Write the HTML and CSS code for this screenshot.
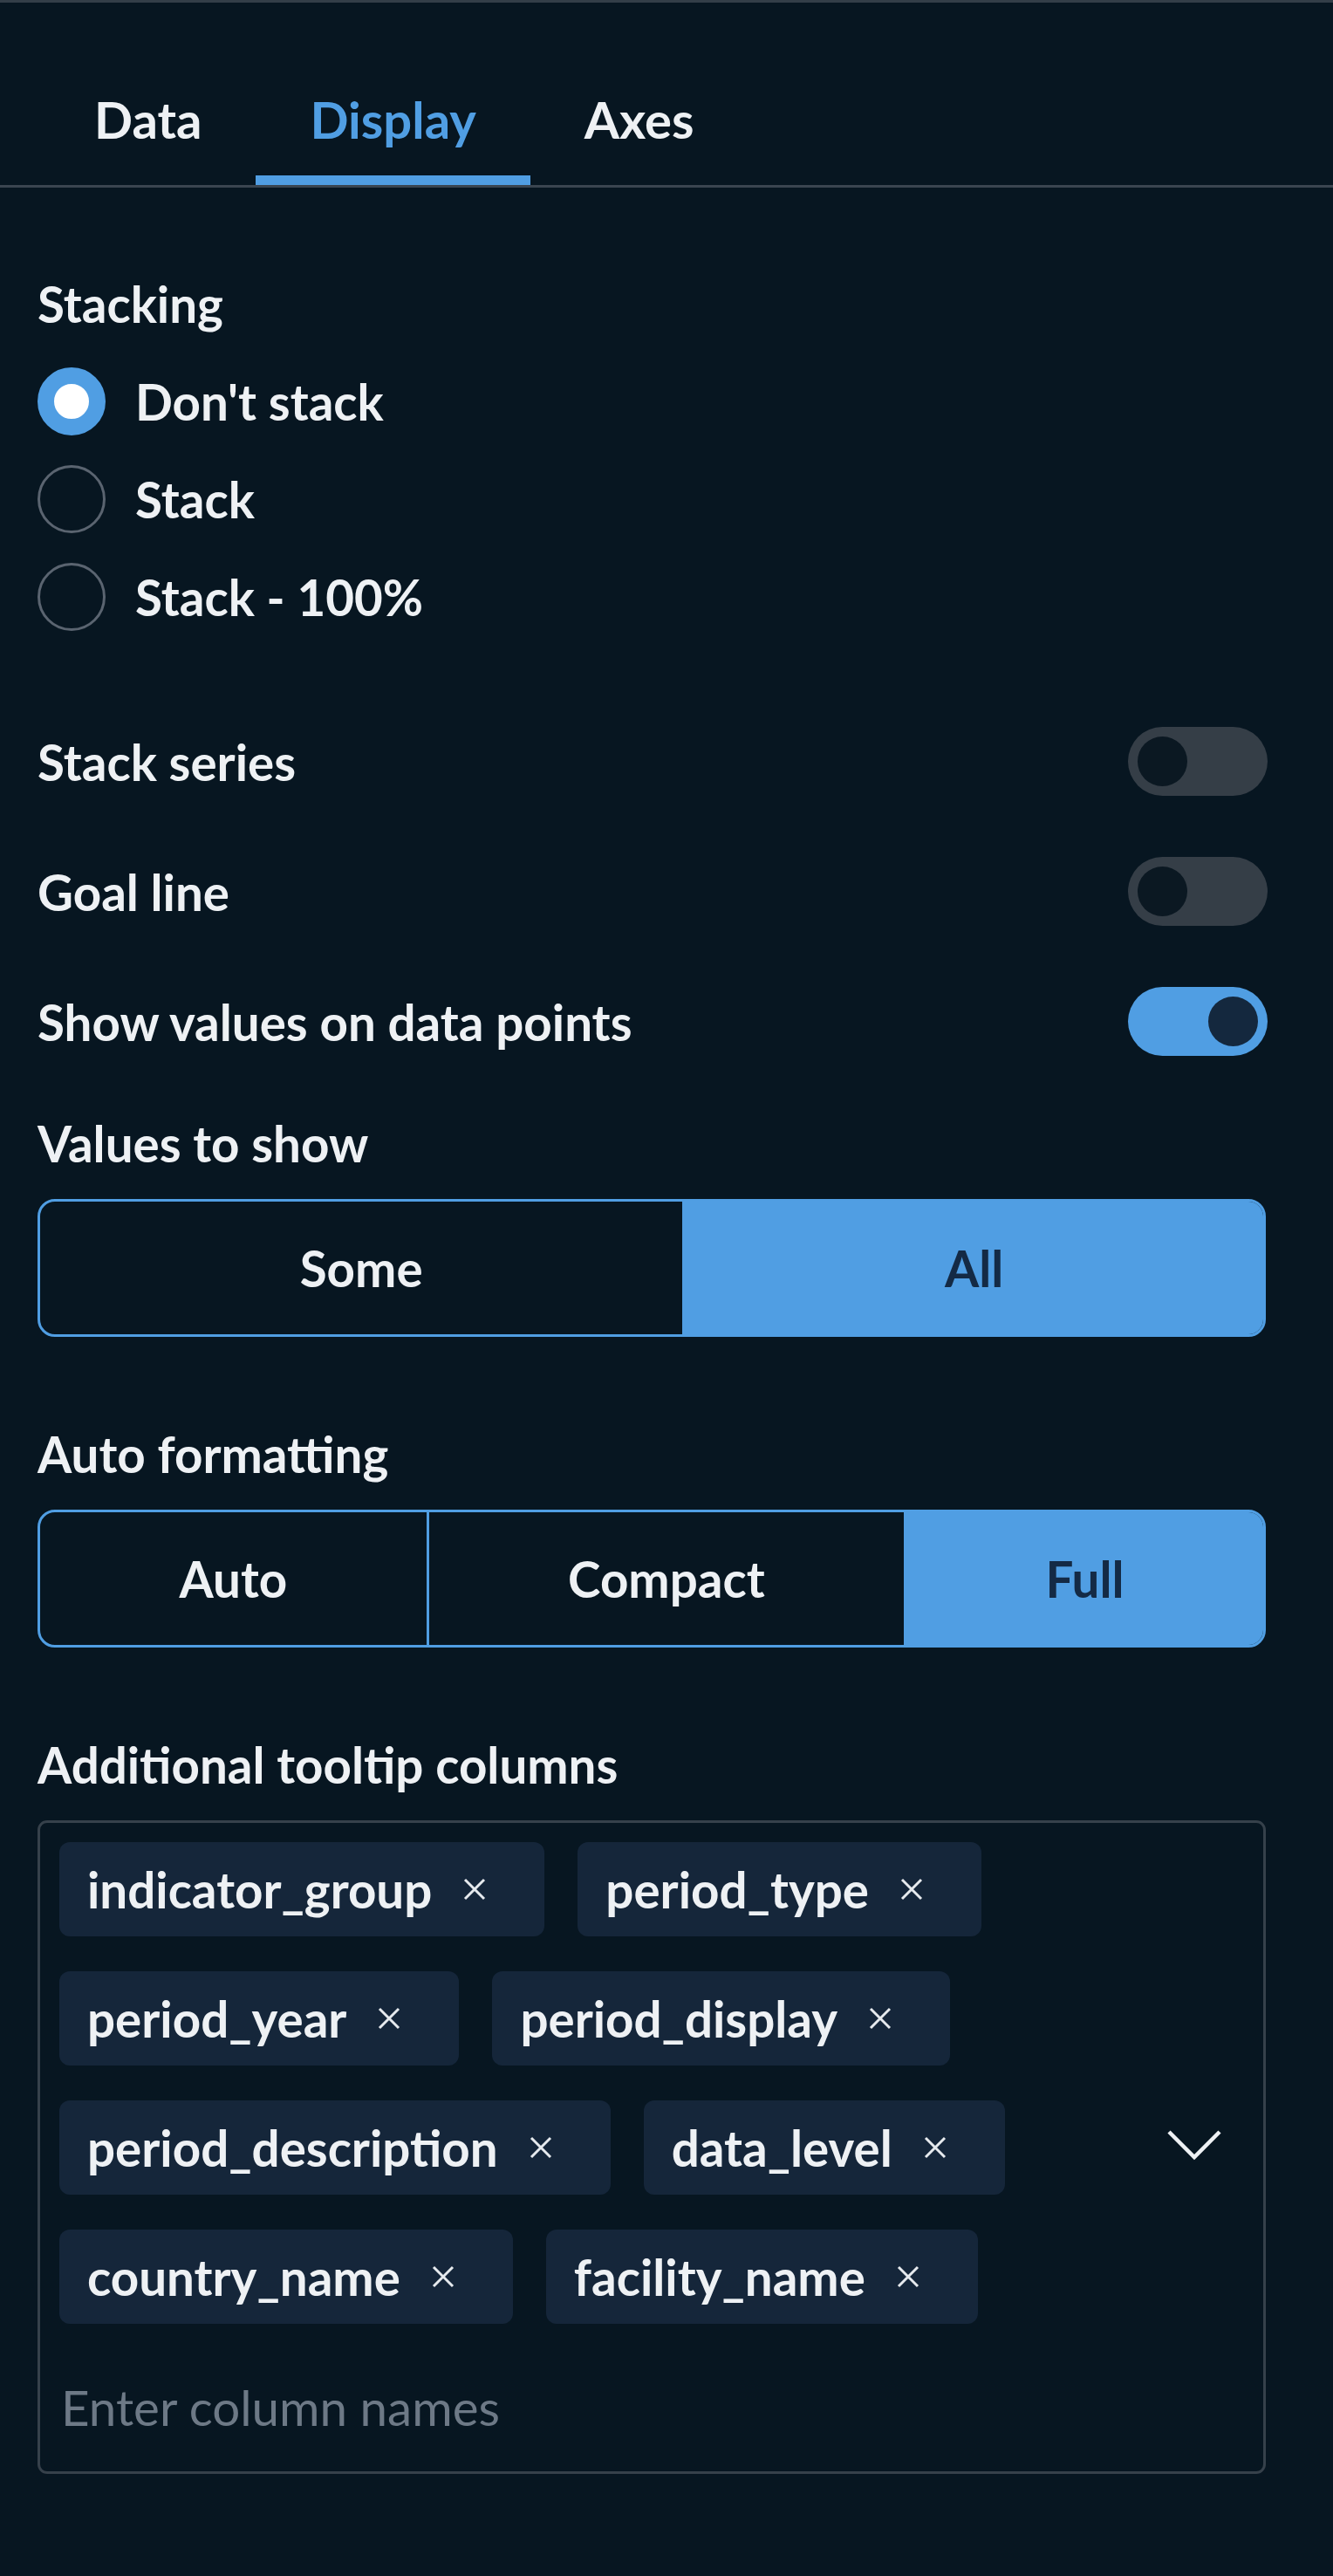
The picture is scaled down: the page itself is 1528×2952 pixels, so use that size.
FILE: index.html
```html
<!DOCTYPE html>
<html lang="en">
<head>
<meta charset="utf-8">
<title>Display settings</title>
<link rel="stylesheet" href="styles.css">
</head>
<body>
<div class="panel">
  <nav class="tabs">
    <div class="tab">Data</div>
    <div class="tab active">Display</div>
    <div class="tab">Axes</div>
  </nav>

  <div class="content">
    <div class="label stacking-label">Stacking</div>
    <div class="radios">
      <div class="radio-row"><span class="radio checked"></span><span class="radio-text">Don't stack</span></div>
      <div class="radio-row"><span class="radio"></span><span class="radio-text">Stack</span></div>
      <div class="radio-row"><span class="radio"></span><span class="radio-text">Stack - 100%</span></div>
    </div>

    <div class="toggles">
      <div class="toggle-row"><span class="label">Stack series</span><span class="toggle"></span></div>
      <div class="toggle-row"><span class="label">Goal line</span><span class="toggle"></span></div>
      <div class="toggle-row"><span class="label">Show values on data points</span><span class="toggle on"></span></div>
    </div>

    <div class="label field-label values-label">Values to show</div>
    <div class="segmented">
      <div class="seg">Some</div>
      <div class="seg selected">All</div>
    </div>

    <div class="label field-label format-label">Auto formatting</div>
    <div class="segmented">
      <div class="seg">Auto</div>
      <div class="seg">Compact</div>
      <div class="seg selected">Full</div>
    </div>

    <div class="label field-label tooltip-label">Additional tooltip columns</div>
    <div class="multiselect">
      <div class="ms-main">
        <div class="chips">
          <span class="chip">indicator_group<svg class="x" viewBox="0 0 30 30"><path d="M4 4 L26 26 M26 4 L4 26"/></svg></span>
          <span class="chip">period_type<svg class="x" viewBox="0 0 30 30"><path d="M4 4 L26 26 M26 4 L4 26"/></svg></span>
          <span class="chip">period_year<svg class="x" viewBox="0 0 30 30"><path d="M4 4 L26 26 M26 4 L4 26"/></svg></span>
          <span class="chip">period_display<svg class="x" viewBox="0 0 30 30"><path d="M4 4 L26 26 M26 4 L4 26"/></svg></span>
          <span class="chip">period_description<svg class="x" viewBox="0 0 30 30"><path d="M4 4 L26 26 M26 4 L4 26"/></svg></span>
          <span class="chip">data_level<svg class="x" viewBox="0 0 30 30"><path d="M4 4 L26 26 M26 4 L4 26"/></svg></span>
          <span class="chip">country_name<svg class="x" viewBox="0 0 30 30"><path d="M4 4 L26 26 M26 4 L4 26"/></svg></span>
          <span class="chip">facility_name<svg class="x" viewBox="0 0 30 30"><path d="M4 4 L26 26 M26 4 L4 26"/></svg></span>
        </div>
        <div class="placeholder">Enter column names</div>
      </div>
      <svg class="chevron" viewBox="0 0 64 36"><path d="M3 3 L32 32 L61 3"/></svg>
    </div>
  </div>
</div>
</body>
</html>
```
FILE: styles.css
```css
html, body {
  margin: 0;
  padding: 0;
  background: #071621;
}
body {
  font-family: Lato, "Noto Sans", sans-serif;
  font-weight: 700;
  font-size: 56.5px;
  line-height: 68px;
  color: #eef1f4;
  min-height: 2952px;
}
.panel {
  width: 1528px;
}
.tabs {
  display: flex;
  border-top: 3px solid #333e48;
  border-bottom: 3px solid #3a4550;
  padding-left: 46px;
  font-size: 58px;
}
.tab {
  padding: 100px 62px 30px;
  border-bottom: 11px solid transparent;
}
.tab.active {
  color: #509ee3;
  border-bottom-color: #509ee3;
}
.content {
  padding: 0 77px 0 43px;
}
.stacking-label {
  margin-top: 99px;
}
.radios {
  display: flex;
  flex-direction: column;
  gap: 34px;
  margin-top: 39px;
}
.radio-row {
  display: flex;
  align-items: center;
  height: 78px;
}
.radio {
  box-sizing: border-box;
  width: 78px;
  height: 78px;
  border-radius: 50%;
  border: 3px solid #5a6470;
  flex: none;
}
.radio.checked {
  border: 19px solid #509ee3;
  background: #ffffff;
}
.radio-text {
  margin-left: 34px;
}
.toggles {
  display: flex;
  flex-direction: column;
  gap: 70px;
  margin-top: 110px;
}
.toggle-row {
  display: flex;
  align-items: center;
  justify-content: space-between;
  height: 79px;
}
.toggle {
  box-sizing: border-box;
  width: 160px;
  height: 79px;
  border-radius: 40px;
  background: #353e47;
  padding: 11px;
  display: flex;
  justify-content: flex-start;
  margin-right: -2px;
}
.toggle::after {
  content: "";
  width: 57px;
  height: 57px;
  border-radius: 50%;
  background: #0b1822;
}
.toggle.on {
  background: #509ee3;
  justify-content: flex-end;
}
.toggle.on::after {
  background: #14283e;
}
.values-label {
  margin-top: 66px;
}
.format-label,
.tooltip-label {
  margin-top: 100px;
}
.segmented {
  display: flex;
  margin-top: 30px;
  height: 158px;
  box-sizing: border-box;
  border: 3px solid #509ee3;
  border-radius: 20px;
  overflow: hidden;
}
.seg {
  flex: 1 1 auto;
  display: flex;
  align-items: center;
  justify-content: center;
  border-left: 3px solid #509ee3;
}
.seg:first-child {
  border-left: none;
}
.seg.selected {
  background: #509ee3;
  color: #142a45;
}
.multiselect {
  margin-top: 30px;
  box-sizing: border-box;
  height: 749px;
  border: 3px solid #36414b;
  border-radius: 11px;
  padding: 22px 0 40px 22px;
  display: flex;
  align-items: center;
}
.ms-main {
  flex: 1;
  align-self: stretch;
  display: flex;
  flex-direction: column;
}
.chips {
  display: flex;
  flex-wrap: wrap;
  column-gap: 38px;
  row-gap: 40px;
  width: 1200px;
}
.chip {
  display: inline-flex;
  align-items: center;
  background: #15263a;
  border-radius: 12px;
  padding: 20px 65px 20px 32px;
}
.x {
  width: 30px;
  height: 30px;
  margin-left: 34px;
  fill: none;
  stroke: #e6eaee;
  stroke-width: 3;
}
.placeholder {
  margin-top: auto;
  padding-left: 2px;
  font-weight: 400;
  color: #6d7986;
}
.chevron {
  width: 64px;
  height: 36px;
  margin-right: 47px;
  margin-top: 12px;
  fill: none;
  stroke: #eef1f4;
  stroke-width: 4.5;
  flex: none;
}
```
